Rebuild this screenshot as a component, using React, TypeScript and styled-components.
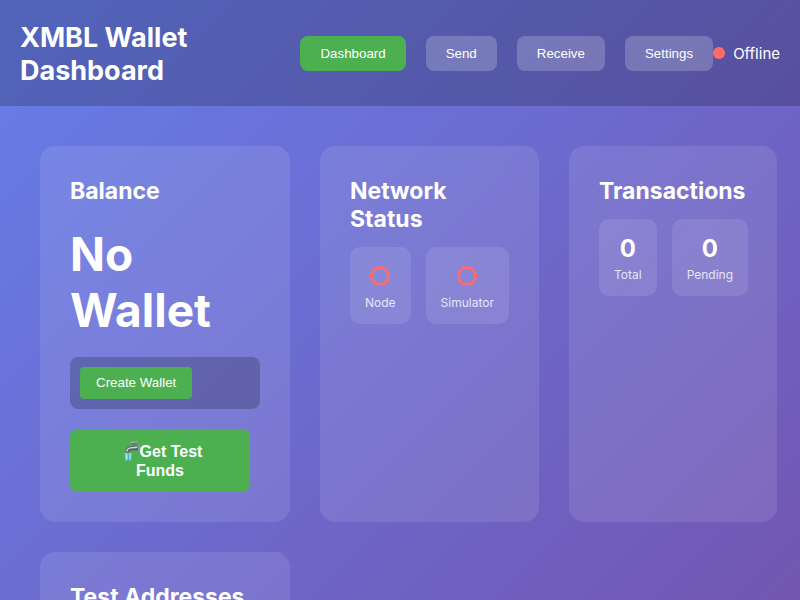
import React from "react";
import styled, { createGlobalStyle } from "styled-components";

const GlobalStyle = createGlobalStyle`
  * { box-sizing: border-box; }
  html { scrollbar-width: none; }
  body {
    margin: 0;
    color: #fff;
    font-family: Inter, "Liberation Sans", sans-serif;
  }
`;

const Page = styled.div`
  min-height: 100vh;
  background: linear-gradient(135deg, #667eea 0%, #764ba2 100%);
`;

const Header = styled.header`
  display: flex;
  align-items: center;
  justify-content: space-between;
  padding: 19px 20px;
  background: rgba(0, 0, 0, 0.2);
`;

const Title = styled.h1`
  flex: 1;
  margin: 0;
  padding-top: 2px;
  font-size: 27px;
  font-weight: 700;
  line-height: 33px;
`;

const Nav = styled.nav`
  display: flex;
  gap: 20px;
`;

const NavButton = styled.button<{ $active?: boolean }>`
  padding: 10px 20px;
  border: 0;
  border-radius: 8px;
  background: ${(p) => (p.$active ? "#4caf50" : "rgba(255, 255, 255, 0.2)")};
  color: #fff;
  font-family: "Liberation Sans", sans-serif;
  font-weight: 500;
  cursor: pointer;
`;

const Status = styled.div`
  display: flex;
  align-items: center;
  gap: 8px;
  font-size: 15px;
`;

const StatusDot = styled.span`
  width: 12px;
  height: 12px;
  border-radius: 50%;
  background: #ff6b6b;
`;

const Grid = styled.main`
  display: grid;
  grid-template-columns: minmax(250px, 1fr) minmax(219px, 1fr) minmax(208px, 1fr);
  gap: 30px;
  padding: 40px;
`;

const Card = styled.section`
  padding: 31px 30px 30px;
  border-radius: 15px;
  background: rgba(255, 255, 255, 0.1);
`;

const AddressCard = styled(Card)`
  min-height: 400px;
`;

const CardTitle = styled.h2`
  margin: 0 0 14px;
  font-size: 23px;
  font-weight: 700;
  line-height: 28px;
`;

const Balance = styled.p`
  margin: 21px 0 19px;
  font-size: 46px;
  font-weight: 700;
  line-height: 56px;
`;

const WalletBox = styled.div`
  margin-bottom: 20px;
  padding: 10px;
  border-radius: 8px;
  background: rgba(0, 0, 0, 0.2);
`;

const CreateButton = styled.button`
  display: block;
  padding: 8px 16px;
  border: 0;
  border-radius: 4px;
  background: #4caf50;
  color: #fff;
  font-family: "Liberation Sans", sans-serif;
  line-height: 16px;
  cursor: pointer;
`;

const FundsButton = styled.button`
  display: block;
  width: 180px;
  padding: 13px 40px 12px;
  border: 0;
  border-radius: 8px;
  background: #4caf50;
  color: #fff;
  font-family: "Liberation Sans", sans-serif;
  font-size: 16px;
  font-weight: 700;
  line-height: 19px;
  cursor: pointer;
`;

const FaucetSvg = styled.svg`
  width: 16px;
  height: 20px;
  margin: -6px 0 -2px 6px;
  vertical-align: middle;
`;

const Stats = styled.div`
  display: flex;
  gap: 15px;
`;

const Stat = styled.div`
  flex: 1 1 auto;
  padding: 15px 15px 14px;
  border-radius: 10px;
  background: rgba(255, 255, 255, 0.1);
  text-align: center;
`;

const StatValue = styled.div`
  display: flex;
  align-items: center;
  justify-content: center;
  height: 28px;
  margin-bottom: 6px;
  font-size: 24px;
  font-weight: 700;
`;

const StatLabel = styled.div`
  font-size: 12px;
  line-height: 14px;
  opacity: 0.8;
`;

const Faucet = () => (
  <FaucetSvg viewBox="0 0 16 20" aria-hidden="true">
    <path d="M6.2 1.2 14.4.6v2l-2.6.6v2.4H9V3.4L6.4 3z" fill="#6f777d" />
    <path d="M6.4.8 14 .4v1L6.6 2z" fill="#aeb4b8" />
    <path d="M1.6 11.6V10c0-2.8 1.8-4.4 4.4-4.8l8.6-.6v4.6L7 9.8c-1.4.1-2 .6-2 1.8z" fill="#59646c" />
    <path d="M2.4 10.4V9.8c.2-2 1.8-3.2 3.8-3.6l7.2-.6V7L6.8 7.6c-2 .2-3 1.2-3.2 2.8z" fill="#d6dadd" />
    <path d="M14 4h1.6v6H14z" fill="#8d969d" />
    <path d="M.6 12h7.2l-.4 7.6H1z" fill="#6fc0c6" />
    <path d="M1.8 13.4h1.8v5.2H2zM5.4 13h1.2l-.2 5.6h-1z" fill="#b4e8e8" />
    <path d="M3.8 12.6h1.2v6.4H3.8z" fill="#53a9b5" />
    <path d="M.6 12h7.2v1H.6z" fill="#a9bfc4" />
  </FaucetSvg>
);

const Ring = () => (
  <svg width="20" height="20" viewBox="0 0 20 20" role="img" aria-label="Offline">
    <circle cx="10" cy="10" r="8.6" fill="none" stroke="#ff6b6b" strokeWidth="2.8" />
  </svg>
);

export default function App() {
  return (
    <>
      <GlobalStyle />
      <Page>
        <Header>
          <Title>XMBL Wallet Dashboard</Title>
          <Nav>
            <NavButton $active>Dashboard</NavButton>
            <NavButton>Send</NavButton>
            <NavButton>Receive</NavButton>
            <NavButton>Settings</NavButton>
          </Nav>
          <Status>
            <StatusDot />
            <span>Offline</span>
          </Status>
        </Header>
        <Grid>
          <Card>
            <CardTitle>Balance</CardTitle>
            <Balance>No Wallet</Balance>
            <WalletBox>
              <CreateButton>Create Wallet</CreateButton>
            </WalletBox>
            <FundsButton>
              <Faucet />
              Get Test Funds
            </FundsButton>
          </Card>
          <Card>
            <CardTitle>Network Status</CardTitle>
            <Stats>
              <Stat>
                <StatValue><Ring /></StatValue>
                <StatLabel>Node</StatLabel>
              </Stat>
              <Stat>
                <StatValue><Ring /></StatValue>
                <StatLabel>Simulator</StatLabel>
              </Stat>
            </Stats>
          </Card>
          <Card>
            <CardTitle>Transactions</CardTitle>
            <Stats>
              <Stat>
                <StatValue>0</StatValue>
                <StatLabel>Total</StatLabel>
              </Stat>
              <Stat>
                <StatValue>0</StatValue>
                <StatLabel>Pending</StatLabel>
              </Stat>
            </Stats>
          </Card>
          <AddressCard>
            <CardTitle>Test Addresses</CardTitle>
          </AddressCard>
        </Grid>
      </Page>
    </>
  );
}
